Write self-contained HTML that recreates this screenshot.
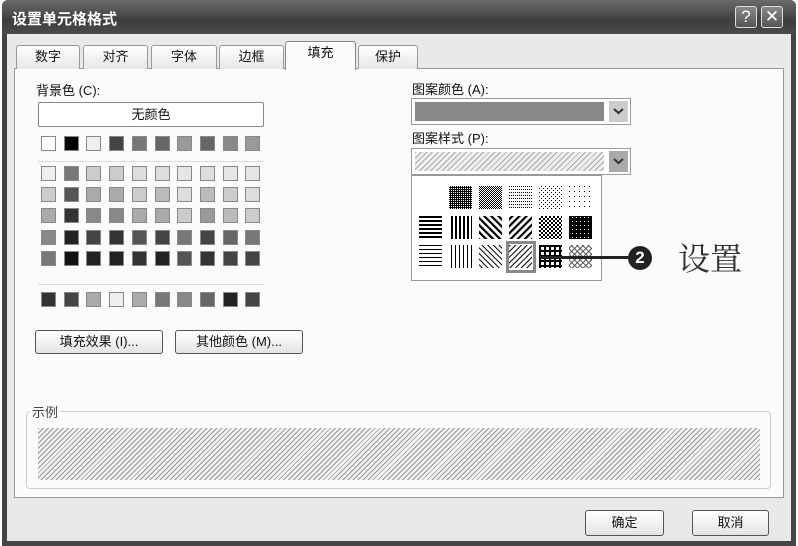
<!DOCTYPE html>
<html><head><meta charset="utf-8"><style>
*{margin:0;padding:0;box-sizing:border-box}
body{width:798px;height:546px;background:#fff;position:relative;overflow:hidden;font-family:"Liberation Sans","Noto Sans CJK SC",sans-serif;font-size:13px;color:#111}
.a{position:absolute}
.win{left:2px;top:0;width:794px;height:546px;background:#e9e9e9;border:5px solid #444;border-top:none;border-radius:6px 6px 0 0}
.title{left:2px;top:0;width:794px;height:34px;background:linear-gradient(#6a6a6a,#3e3e3e 60%,#4a4a4a);border-radius:6px 6px 0 0;color:#fff;font-weight:bold;font-size:15px;padding:8px 0 0 10px}
.tb{top:6px;width:22px;height:22px;border:1px solid #ddd;border-radius:3px;background:linear-gradient(#888,#555);color:#fff;font-size:17px;text-align:center;line-height:20px}
.tab{top:45px;height:24px;border:1px solid #999;border-bottom:none;border-radius:3px 3px 0 0;background:linear-gradient(#fff,#e6e6e6);text-align:center;line-height:22px;font-size:13px}
.panel{left:14px;top:68px;width:770px;height:430px;background:#fbfbfb;border:1px solid #999}
.sw{width:15px;height:15px;border:1px solid #888}
.btn{height:24px;border:1px solid #555;border-radius:3px;background:linear-gradient(#fff,#e4e4e4);text-align:center;line-height:22px;font-size:13px}
.arr{width:19px;height:21px;background:#ccc;text-align:center}
</style></head><body>
<div class="a win"></div>
<div class="a title">设置单元格格式</div>
<div class="a tb" style="left:735px">?</div>
<div class="a tb" style="left:761px">✕</div>
<div class="a panel"></div>
<div class="a tab" style="left:16px;width:64px">数字</div>
<div class="a tab" style="left:83px;width:65px">对齐</div>
<div class="a tab" style="left:151px;width:66px">字体</div>
<div class="a tab" style="left:219px;width:65px">边框</div>
<div class="a tab" style="left:285px;top:41px;height:29px;width:71px;background:#fbfbfb;border-color:#888">填充</div>
<div class="a tab" style="left:358px;width:60px">保护</div>

<div class="a" style="left:36px;top:80px">背景色 (C):</div>
<div class="a" style="left:38px;top:102px;width:226px;height:25px;border:1px solid #888;border-radius:2px;background:#fff;text-align:center;line-height:23px">无颜色</div>
<div class="a" style="left:38px;top:161px;width:226px;border-top:1px solid #ddd"></div>
<div class="a" style="left:38px;top:284px;width:226px;border-top:1px solid #ddd"></div>
<div id="grid"></div>

<div class="a btn" style="left:35px;top:330px;width:128px">填充效果 (I)...</div>
<div class="a btn" style="left:175px;top:330px;width:128px">其他颜色 (M)...</div>

<div class="a" style="left:412px;top:79px">图案颜色 (A):</div>
<div class="a" style="left:411px;top:98px;width:220px;height:27px;border:1px solid #999;background:#fff"></div>
<div class="a" style="left:415px;top:102px;width:189px;height:19px;background:#888"></div>
<svg class="a arr" style="left:609px;top:101px" width="19" height="21"><path d="M5 8l4.5 4 4.5-4" fill="none" stroke="#333" stroke-width="2"/></svg>
<div class="a" style="left:412px;top:128px">图案样式 (P):</div>
<div class="a" style="left:411px;top:148px;width:220px;height:27px;border:1px solid #999;background:#fff"></div>
<div class="a" style="left:415px;top:152px;width:189px;height:19px;background:repeating-linear-gradient(135deg,#aaa 0 1px,#eee 1px 4px)"></div>
<svg class="a arr" style="left:609px;top:151px;background:#aaa" width="19" height="21"><path d="M5 8l4.5 4 4.5-4" fill="none" stroke="#333" stroke-width="2"/></svg>
<div class="a" style="left:411px;top:175px;width:191px;height:106px;border:1px solid #999;background:#fff"></div>
<svg class="a" style="left:411px;top:175px" width="191" height="106">
<defs>
<pattern id="p1" width="2" height="2" patternUnits="userSpaceOnUse"><rect width="2" height="2" fill="#000"/><rect width="1" height="1" fill="#fff"/></pattern>
<pattern id="p2" width="2" height="2" patternUnits="userSpaceOnUse"><rect width="2" height="2" fill="#fff"/><rect width="1" height="1" fill="#000"/><rect x="1" y="1" width="1" height="1" fill="#000"/></pattern>
<pattern id="p3" width="2" height="3" patternUnits="userSpaceOnUse"><rect width="1" height="1" fill="#000"/></pattern>
<pattern id="p4" width="4" height="4" patternUnits="userSpaceOnUse"><rect width="1" height="1" fill="#000"/><rect x="2" y="2" width="1" height="1" fill="#000"/></pattern>
<pattern id="p5" width="5" height="5" patternUnits="userSpaceOnUse"><rect width="1" height="1" fill="#000"/></pattern>
<pattern id="h1" width="4" height="4" patternUnits="userSpaceOnUse"><rect width="4" height="2" fill="#000"/></pattern>
<pattern id="v1" width="4" height="4" patternUnits="userSpaceOnUse"><rect width="2" height="4" fill="#000"/></pattern>
<pattern id="d1" width="5" height="5" patternUnits="userSpaceOnUse" patternTransform="rotate(45)"><rect width="2.2" height="5" fill="#000"/></pattern>
<pattern id="d2" width="5" height="5" patternUnits="userSpaceOnUse" patternTransform="rotate(-45)"><rect width="2.2" height="5" fill="#000"/></pattern>
<pattern id="c1" width="4" height="4" patternUnits="userSpaceOnUse"><rect width="4" height="4" fill="#000"/><rect width="2" height="2" fill="#fff"/><rect x="2" y="2" width="2" height="2" fill="#fff"/></pattern>
<pattern id="c2" width="4" height="4" patternUnits="userSpaceOnUse"><rect width="4" height="4" fill="#000"/><rect x="1" y="1" width="1" height="1" fill="#fff"/></pattern>
<pattern id="h2" width="4" height="4" patternUnits="userSpaceOnUse"><rect width="4" height="1" fill="#000"/></pattern>
<pattern id="v2" width="4" height="4" patternUnits="userSpaceOnUse"><rect width="1" height="4" fill="#000"/></pattern>
<pattern id="d3" width="4" height="4" patternUnits="userSpaceOnUse" patternTransform="rotate(45)"><rect width="1" height="4" fill="#000"/></pattern>
<pattern id="d4" width="4" height="4" patternUnits="userSpaceOnUse" patternTransform="rotate(-45)"><rect width="1" height="4" fill="#000"/></pattern>
<pattern id="g1" width="5" height="5" patternUnits="userSpaceOnUse"><rect width="5" height="2" fill="#000"/><rect width="2" height="5" fill="#000"/></pattern>
<pattern id="x1" width="4" height="4" patternUnits="userSpaceOnUse" patternTransform="rotate(45)"><rect width="1" height="4" fill="#555"/><rect width="4" height="1" fill="#555"/></pattern>
</defs>
<g transform="translate(38,11)">
<rect x="0" width="23" height="23" fill="url(#p1)"/><rect x="30" width="23" height="23" fill="url(#p2)"/><rect x="60" width="23" height="23" fill="url(#p3)"/><rect x="90" width="23" height="23" fill="url(#p4)"/><rect x="120" width="23" height="23" fill="url(#p5)"/>
</g>
<g transform="translate(8,41)">
<rect x="0" width="23" height="23" fill="url(#h1)"/><rect x="30" width="23" height="23" fill="url(#v1)"/><rect x="60" width="23" height="23" fill="url(#d2)"/><rect x="90" width="23" height="23" fill="url(#d1)"/><rect x="120" width="23" height="23" fill="url(#c1)"/><rect x="150" width="23" height="23" fill="url(#c2)"/>
</g>
<g transform="translate(8,70)">
<rect x="0" width="23" height="23" fill="url(#h2)"/><rect x="30" width="23" height="23" fill="url(#v2)"/><rect x="60" width="23" height="23" fill="url(#d4)"/><rect x="90" width="23" height="23" fill="url(#d3)"/><rect x="120" width="23" height="23" fill="url(#g1)"/><rect x="150" width="23" height="23" fill="url(#x1)"/>
<rect x="88.5" y="-2.5" width="27" height="29" fill="none" stroke="#888" stroke-width="3"/>
</g>
</svg>
<div class="a" style="left:540px;top:256px;width:92px;height:3px;background:#222"></div>
<div class="a" style="left:628px;top:246px;width:24px;height:24px;border-radius:50%;background:#222;color:#fff;font-weight:bold;text-align:center;line-height:24px;font-size:17px">2</div>
<div class="a" style="left:678px;top:234px;font-size:32px;color:#333;font-family:'Noto Serif CJK SC',serif">设置</div>

<div class="a" style="left:26px;top:411px;width:745px;height:78px;border:1px solid #ccc;border-radius:4px"></div>
<div class="a" style="left:30px;top:402px;background:#fbfbfb;padding:0 2px;color:#444">示例</div>
<div class="a" style="left:38px;top:428px;width:722px;height:52px;background:repeating-linear-gradient(135deg,#999 0 1px,#f2f2f2 1px 3.5px)"></div>

<div class="a btn" style="left:585px;top:510px;width:79px;height:26px;line-height:24px">确定</div>
<div class="a btn" style="left:692px;top:510px;width:77px;height:26px;line-height:24px">取消</div>

<script>
var rows=[
['#fff','#000','#eee','#444','#777','#666','#999','#666','#888','#999'],
['#eee','#777','#ccc','#ccc','#ddd','#ddd','#e6e6e6','#ddd','#e6e6e6','#e6e6e6'],
['#ccc','#555','#aaa','#aaa','#ccc','#bbb','#ddd','#bbb','#ccc','#ddd'],
['#aaa','#333','#888','#888','#aaa','#aaa','#ccc','#999','#bbb','#ccc'],
['#888','#222','#444','#333','#555','#444','#777','#444','#666','#777'],
['#777','#111','#222','#222','#333','#222','#555','#333','#444','#444'],
['#333','#444','#aaa','#eee','#aaa','#777','#888','#666','#222','#444']];
var ys=[136,166,187,208,230,251,292],h='';
rows.forEach(function(r,i){r.forEach(function(c,j){h+='<div class="a sw" style="left:'+(41+j*22.7)+'px;top:'+ys[i]+'px;background:'+c+'"></div>';});});
document.getElementById('grid').innerHTML=h;
</script>
</body></html>
